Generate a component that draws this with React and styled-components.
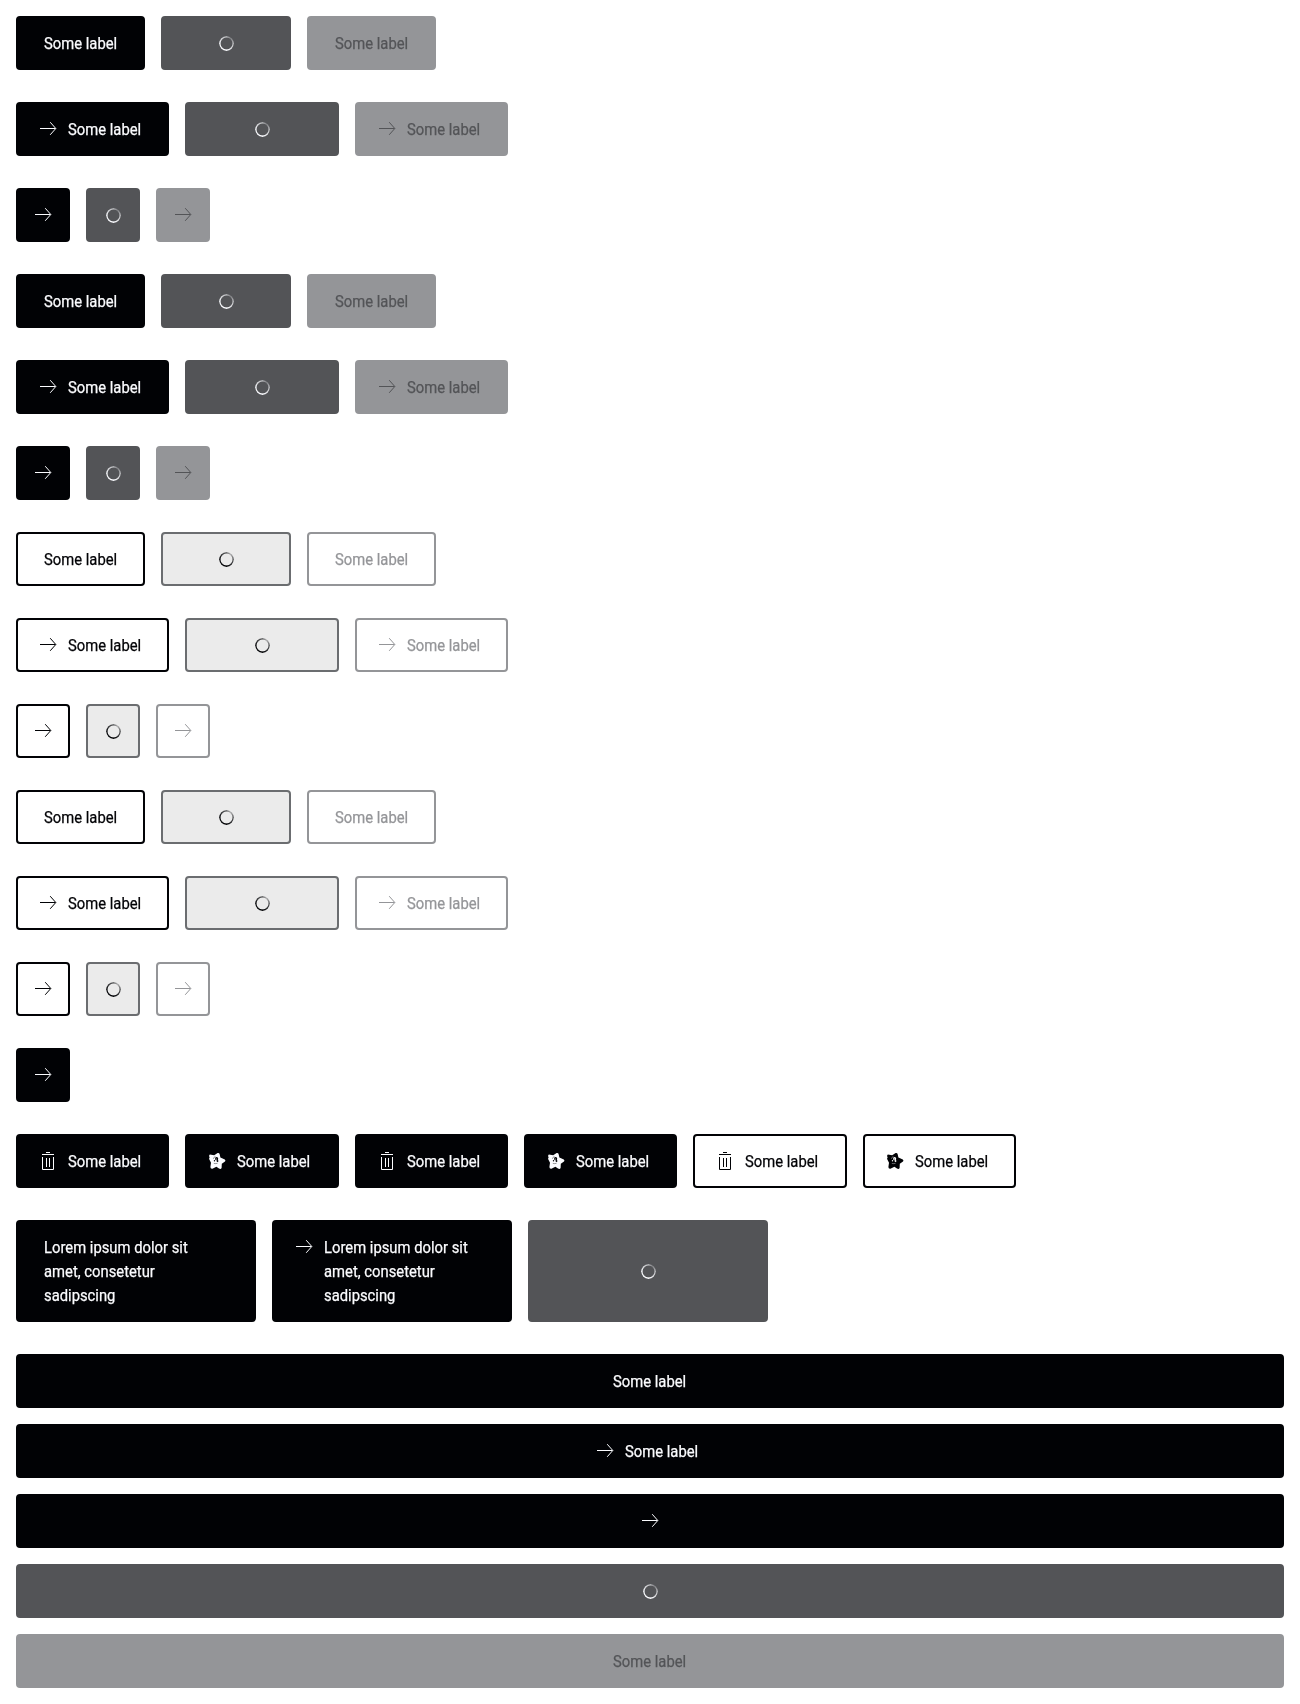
import React from 'react';
import styled, { createGlobalStyle, css } from 'styled-components';

const GlobalStyle = createGlobalStyle`
  * { box-sizing: border-box; }
  body { margin: 0; background: #fff; }
`;

const palettes = {
  primary: {
    idle: { bg: '#010205', border: '#010205', fg: '#fbfcff' },
    loading: { bg: '#535457', border: '#535457', fg: '#fbfcff' },
    disabled: { bg: '#949598', border: '#949598', fg: '#535457' },
  },
  secondary: {
    idle: { bg: 'transparent', border: '#010205', fg: '#010205' },
    loading: { bg: '#ebebeb', border: '#6b6d70', fg: '#010205' },
    disabled: { bg: 'transparent', border: '#949598', fg: '#949598' },
  },
};

const Page = styled.main`
  display: flex;
  flex-direction: column;
  gap: 32px;
  padding: 16px;
`;

const Row = styled.div`
  display: flex;
  align-items: flex-start;
  gap: 16px;
`;

const Stack = styled.div`
  display: flex;
  flex-direction: column;
  gap: 16px;
`;

const paddings = {
  label: '13px 26px',
  iconLabel: '13px 26px 13px 18px',
  icon: '13px',
};

const widths = { label: '129.36px', iconLabel: '153.36px', icon: '54px' };

const ButtonBox = styled.button`
  display: flex;
  justify-content: ${(p) => (p.$multi ? 'flex-start' : 'center')};
  align-items: ${(p) => (p.$multi && !p.$center ? 'flex-start' : 'center')};
  gap: 8px;
  flex: none;
  width: ${(p) => (p.$block ? '100%' : p.$multi ? '240px' : widths[p.$kind])};
  height: ${(p) => (p.$multi ? '102px' : '54px')};
  margin: 0;
  padding: ${(p) => paddings[p.$kind]};
  border: 2px solid ${(p) => p.$tone.border};
  border-radius: 4px;
  background: ${(p) => p.$tone.bg};
  color: ${(p) => p.$tone.fg};
  font: 400 16.5px/24px Roboto, 'Liberation Sans', sans-serif;
  text-align: left;
  ${(p) =>
    p.$center &&
    css`
      justify-content: center;
      padding: 13px;
    `}
`;

const Label = styled.span`
  display: block;
  flex: none;
  width: ${(p) => (p.$multi ? '150px' : '73.36px')};
  height: ${(p) => (p.$multi ? '72px' : '24px')};
  white-space: pre;
`;

const Condensed = styled.span`
  display: inline-block;
  padding-top: 1px;
  transform: scaleX(0.897);
  transform-origin: left center;
  -webkit-text-stroke: 0.25px currentColor;
`;

const Icon = styled.svg`
  display: block;
  flex: none;
  width: 24px;
  height: 24px;
`;

const Ring = styled.span`
  flex: none;
  width: 15px;
  height: 15px;
  border-radius: 50%;
  background: conic-gradient(
    from 0deg,
    color-mix(in srgb, currentColor 55%, transparent),
    color-mix(in srgb, currentColor 25%, transparent) 10%,
    color-mix(in srgb, currentColor 50%, transparent) 22%,
    color-mix(in srgb, currentColor 75%, transparent) 35%,
    currentColor 50%,
    color-mix(in srgb, currentColor 85%, transparent) 80%,
    color-mix(in srgb, currentColor 55%, transparent)
  );
  mask: radial-gradient(circle, transparent 5.4px, #000 6.3px);
`;

const icons = {
  arrow: (
    <path d="M4 11.5H19.6M14.2 5.2L19.8 11.5L14.2 17.8" fill="none" stroke="currentColor" />
  ),
  trash: (
    <path
      d="M10 3.5H14M6 5.5H18M6.5 8V20.5H17.5V8M10.5 9V18M13.5 9V18"
      fill="none"
      stroke="currentColor"
    />
  ),
  star: (
    <>
      <path
        d="M4.8 5.4L9.2 6.2L12.6 4Q14.2 3.6 14.6 5L15.4 8.6L19.8 10.6Q21 11.5 20 12.6L16.8 14.8L16.6 19Q15.8 20.6 14 19.6L11.4 17.8L7.4 19.7Q5.4 20 5.4 18L6 13.8L4 9.8L4.6 8.8Q3.4 6.2 4.8 5.4Z"
        fill="currentColor"
      />
      <circle cx="11.6" cy="9.7" r="1.6" fill="var(--face)" />
      <circle cx="9.5" cy="11.7" r=".7" fill="var(--face)" />
      <circle cx="12.5" cy="12" r=".9" fill="var(--face)" />
      <circle cx="11.2" cy="10" r=".6" fill="currentColor" />
      <path d="M8.4 9.8Q8.6 7.9 10.4 7.6M8.8 14.4Q11 15 12.6 14.2" fill="none" stroke="var(--face)" strokeWidth=".4" />
    </>
  ),
};

function Button({ variant = 'primary', state = 'idle', icon, text = 'Some label', iconOnly, multi, block }) {
  const loading = state === 'loading';
  const kind = iconOnly ? 'icon' : icon ? 'iconLabel' : 'label';
  return (
    <ButtonBox
      $tone={palettes[variant][state]}
      $kind={kind}
      $multi={multi}
      $block={block}
      $center={loading}
      disabled={state === 'disabled'}
      aria-busy={loading}
    >
      {loading ? (
        <Ring />
      ) : (
        <>
          {icon && (
            <Icon viewBox="0 0 24 24" style={{ '--face': variant === 'primary' ? '#010205' : '#fff' }}>
              {icons[icon]}
            </Icon>
          )}
          {!iconOnly && (
            <Label $multi={multi}>
              <Condensed>{text}</Condensed>
            </Label>
          )}
        </>
      )}
    </ButtonBox>
  );
}

const states = ['idle', 'loading', 'disabled'];
const kinds = [{}, { icon: 'arrow' }, { icon: 'arrow', iconOnly: true }];
const variants = ['primary', 'primary', 'secondary', 'secondary'];
const lorem = 'Lorem ipsum dolor sit\namet, consetetur\nsadipscing';

export default function App() {
  return (
    <>
      <GlobalStyle />
      <Page>
        {variants.map((variant, v) =>
          kinds.map((kind, k) => (
            <Row key={`${v}-${k}`}>
              {states.map((state) => (
                <Button key={state} variant={variant} state={state} {...kind} />
              ))}
            </Row>
          )),
        )}
        <Row>
          <Button icon="arrow" iconOnly />
        </Row>
        <Row>
          {['primary', 'primary', 'secondary'].map((variant, i) => (
            <React.Fragment key={i}>
              <Button variant={variant} icon="trash" />
              <Button variant={variant} icon="star" />
            </React.Fragment>
          ))}
        </Row>
        <Row>
          <Button multi text={lorem} />
          <Button multi icon="arrow" text={lorem} />
          <Button multi state="loading" />
        </Row>
        <Stack>
          <Button block />
          <Button block icon="arrow" />
          <Button block icon="arrow" iconOnly />
          <Button block state="loading" />
          <Button block state="disabled" />
        </Stack>
      </Page>
    </>
  );
}
